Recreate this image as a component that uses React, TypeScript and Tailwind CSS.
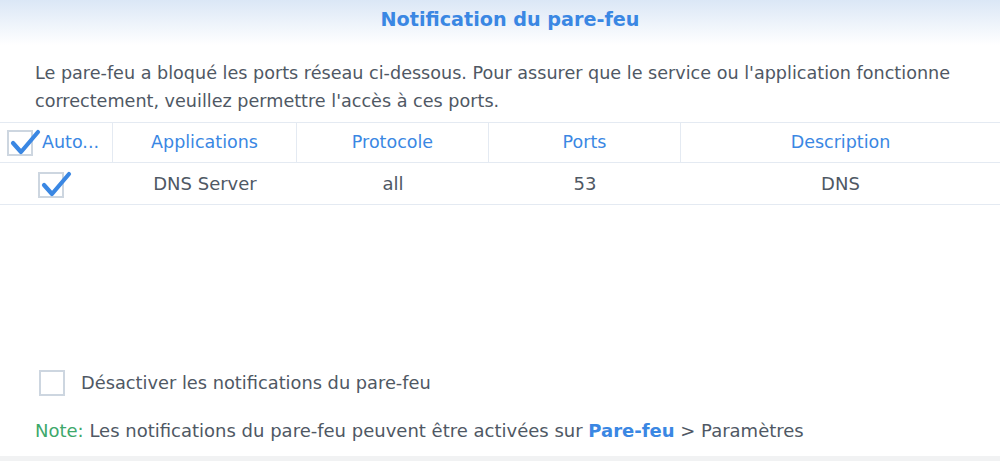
import React from 'react'

const FONT = { fontFamily: '"DejaVu Sans", Verdana, sans-serif' }

function Check({ checked }: { checked: boolean }) {
  return (
    <span className="relative inline-block h-[26px] w-[26px] shrink-0 border-2 border-[#cdd6e0] bg-white">
      {checked && (
        <svg className="absolute left-[1px] top-[-9px] overflow-visible" width="32" height="32" viewBox="0 0 32 32">
          <polyline points="3,20 11,29 28,9" fill="none" stroke="#3a87e3" strokeWidth="4.2" strokeLinecap="round" strokeLinejoin="round" />
        </svg>
      )}
    </span>
  )
}

const COLS = [
  { label: 'Applications', w: 'w-[184px]' },
  { label: 'Protocole', w: 'w-[192px]' },
  { label: 'Ports', w: 'w-[192px]' },
  { label: 'Description', w: 'flex-1' },
]

export default function App() {
  return (
    <div className="relative h-[461px] w-[1000px] overflow-hidden bg-white text-[#4f5864]" style={FONT}>
      {/* Title */}
      <div className="flex h-[45px] justify-center bg-gradient-to-b from-[#dbe7f6] to-white pl-[20px] pt-[8px]">
        <h1 className="text-[19.2px] font-bold leading-[24px] text-[#3a87e3]">Notification du pare-feu</h1>
      </div>

      <p className="mt-[14px] pl-[35px] pr-[20px] text-[17.6px] leading-[28px]">
        Le pare-feu a bloqué les ports réseau ci-dessous. Pour assurer que le service ou l'application fonctionne
        correctement, veuillez permettre l'accès à ces ports.
      </p>

      {/* Table */}
      <div className="mt-[7px] text-[18px]">
        <div className="flex h-[41px] border-y border-[#e4eaf2] text-[17.5px] text-[#3a87e3]">
          <div className="flex w-[113px] items-center gap-[9px] border-r border-[#e4eaf2] pl-[7px]">
            <Check checked />
            <span>Auto...</span>
          </div>
          {COLS.map((c, i) => (
            <div
              key={c.label}
              className={`flex ${c.w} items-center justify-center ${i < COLS.length - 1 ? 'border-r border-[#e4eaf2]' : ''}`}
            >
              {c.label}
            </div>
          ))}
        </div>
        <div className="flex h-[42px] border-b border-[#e4eaf2]">
          <div className="flex w-[113px] items-center pl-[38px] pt-[2px]">
            <Check checked />
          </div>
          <div className="flex w-[184px] items-center justify-center">DNS Server</div>
          <div className="flex w-[192px] items-center justify-center">all</div>
          <div className="flex w-[192px] items-center justify-center">53</div>
          <div className="flex flex-1 items-center justify-center">DNS</div>
        </div>
      </div>

      {/* Options */}
      <div className="mt-[165px] flex items-center gap-[16px] pl-[39px] text-[17.8px]">
        <Check checked={false} />
        <span>Désactiver les notifications du pare-feu</span>
      </div>

      <p className="mt-[24px] pl-[35px] text-[18px] leading-[20px]">
        <span className="text-[#3ea86b]">Note:</span> Les notifications du pare-feu peuvent être activées sur{' '}
        <span className="font-bold text-[#3a87e3]">Pare-feu</span> &gt; Paramètres
      </p>

      <div className="absolute bottom-0 left-0 h-[5px] w-full bg-[#f1f2f3]" />
    </div>
  )
}
